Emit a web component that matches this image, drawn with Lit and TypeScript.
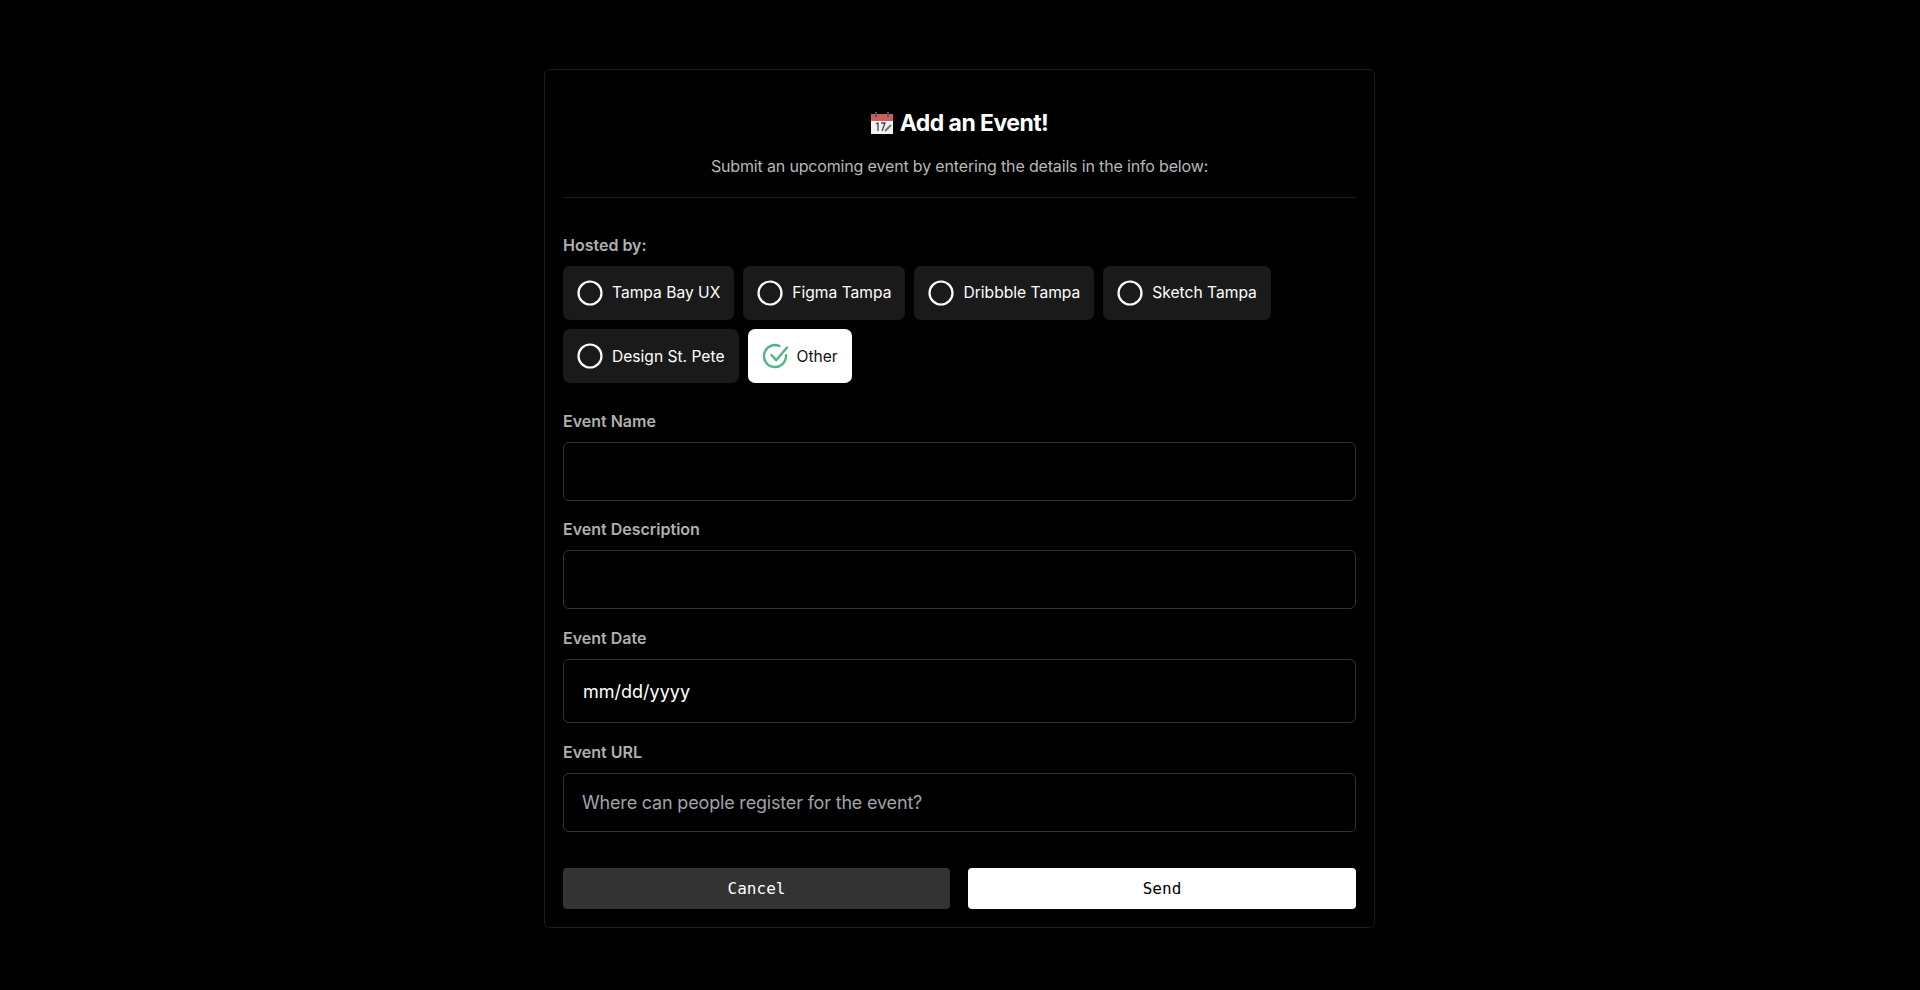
import { LitElement, html, css } from "lit";
import { customElement } from "lit/decorators.js";

const hosts = [
  ["Tampa Bay UX", "Figma Tampa", "Dribbble Tampa", "Sketch Tampa"],
  ["Design St. Pete", "Other"],
];

@customElement("app-root")
export class AppRoot extends LitElement {
  static styles = css`
    :host {
      display: block;
      min-height: 990px;
      background: #000;
      font-family: Inter, "Liberation Sans", sans-serif;
      color: #fff;
      box-sizing: border-box;
      padding: 69px 1px 0 0;
    }
    * { box-sizing: border-box; }
    .card {
      width: 831px;
      height: 859px;
      margin: 0 auto;
      border: 1px solid #1c1c1c;
      border-radius: 6px;
      padding: 0 18px;
      display: flex;
      flex-direction: column;
    }
    .head {
      height: 128px;
      border-bottom: 1px solid #1c1c1c;
      display: flex;
      flex-direction: column;
      align-items: center;
      padding-top: 37px;
    }
    h1 {
      margin: 0;
      font-size: 23px;
      line-height: 32px;
      font-weight: 700;
      letter-spacing: -0.55px;
      display: flex;
      align-items: center;
      gap: 7px;
    }
    .cal { width: 22px; height: 24px; display: block; }
    .sub {
      margin: 15px 0 0;
      font-size: 16px;
      line-height: 24px;
      color: #b8b8b8;
      letter-spacing: -0.16px;
    }
    .label {
      font-size: 16px;
      line-height: 24px;
      font-weight: 600;
      color: #b0b0b0;
      display: block;
    }
    .hosted { margin-top: 35px; height: 24px; }
    .rows { margin-top: 9px; display: flex; flex-direction: column; gap: 9px; }
    .row { display: flex; gap: 9px; }
    .row:first-child .chip span { margin-top: -2px; }
    .chip {
      height: 54px;
      border-radius: 7px;
      background: #1a1a1a;
      display: flex;
      align-items: center;
      padding: 0 14px;
      gap: 9px;
      font-size: 15.6px;
      font-weight: 400;
      color: #fff;
    }
    .chip.on { background: #fff; color: #111; }
    .chip svg { width: 26px; height: 26px; display: block; flex: none; }
    .field { display: flex; flex-direction: column; }
    .field .label { margin-bottom: 9px; }
    .f1 { margin-top: 26px; }
    .f2 { margin-top: 16px; }
    .f3 { margin-top: 17px; }
    .f4 { margin-top: 17px; }
    input {
      display: block;
      width: 100%;
      height: 59px;
      background: #000;
      border: 1px solid #333;
      border-radius: 6px;
      padding: 0 19px;
      font: 400 18px Inter, "Liberation Sans", sans-serif;
      color: #fff;
      outline: none;
    }
    input::placeholder { color: #a0a3a8; opacity: 1; letter-spacing: -0.18px; }
    input.date { height: 64px; }
    input.url { padding-left: 18px; }
    .actions { margin-top: 36px; display: flex; gap: 18px; }
    button {
      height: 41px;
      border: 0;
      border-radius: 4px;
      font: 400 16px "DejaVu Sans Mono", "Liberation Mono", monospace;
    }
    .cancel { flex: none; width: 387px; background: #333; color: #fff; }
    .send { flex: 1; background: #fff; color: #000; }
  `;

  private icon(on: boolean) {
    return on
      ? html`<svg viewBox="0 0 26 26" fill="none" stroke="#4eb584" stroke-width="2.4" stroke-linecap="round" stroke-linejoin="round">
          <path d="M24 12.2V13a11 11 0 1 1-6.5-10" />
          <path d="M9.5 12l4.7 5.3L25 4.5" />
        </svg>`
      : html`<svg viewBox="0 0 26 26" fill="none" stroke="#fff" stroke-width="2.2"><circle cx="13" cy="13" r="11.5" /></svg>`;
  }

  render() {
    return html`
      <div class="card">
        <div class="head">
          <h1>
            <svg class="cal" viewBox="1 0 22 24">
              <rect x="1" y="3" width="22" height="20" fill="#f2f2f2" />
              <rect x="1" y="3" width="22" height="7" fill="#c9605f" />
              <rect x="5" y="1" width="2" height="5" fill="#555" />
              <rect x="17" y="1" width="2" height="5" fill="#555" />
              <path d="M6 13l2-1v8M11 12h4l-3 8" fill="none" stroke="#444" stroke-width="1.3" />
              <path d="M15 20l6-6" stroke="#777" stroke-width="2" />
            </svg>
            Add an Event!
          </h1>
          <p class="sub">Submit an upcoming event by entering the details in the info below:</p>
        </div>
        <span class="label hosted">Hosted by:</span>
        <div class="rows">
          ${hosts.map(
            (r) => html`<div class="row">
              ${r.map(
                (h) => html`<div class="chip ${h === "Other" ? "on" : ""}">${this.icon(h === "Other")}<span>${h}</span></div>`
              )}
            </div>`
          )}
        </div>
        <div class="field f1"><label class="label">Event Name</label><input /></div>
        <div class="field f2"><label class="label">Event Description</label><input /></div>
        <div class="field f3"><label class="label">Event Date</label><input class="date" value="mm/dd/yyyy" /></div>
        <div class="field f4"><label class="label">Event URL</label><input class="url" placeholder="Where can people register for the event?" /></div>
        <div class="actions"><button class="cancel">Cancel</button><button class="send">Send</button></div>
      </div>
    `;
  }
}
